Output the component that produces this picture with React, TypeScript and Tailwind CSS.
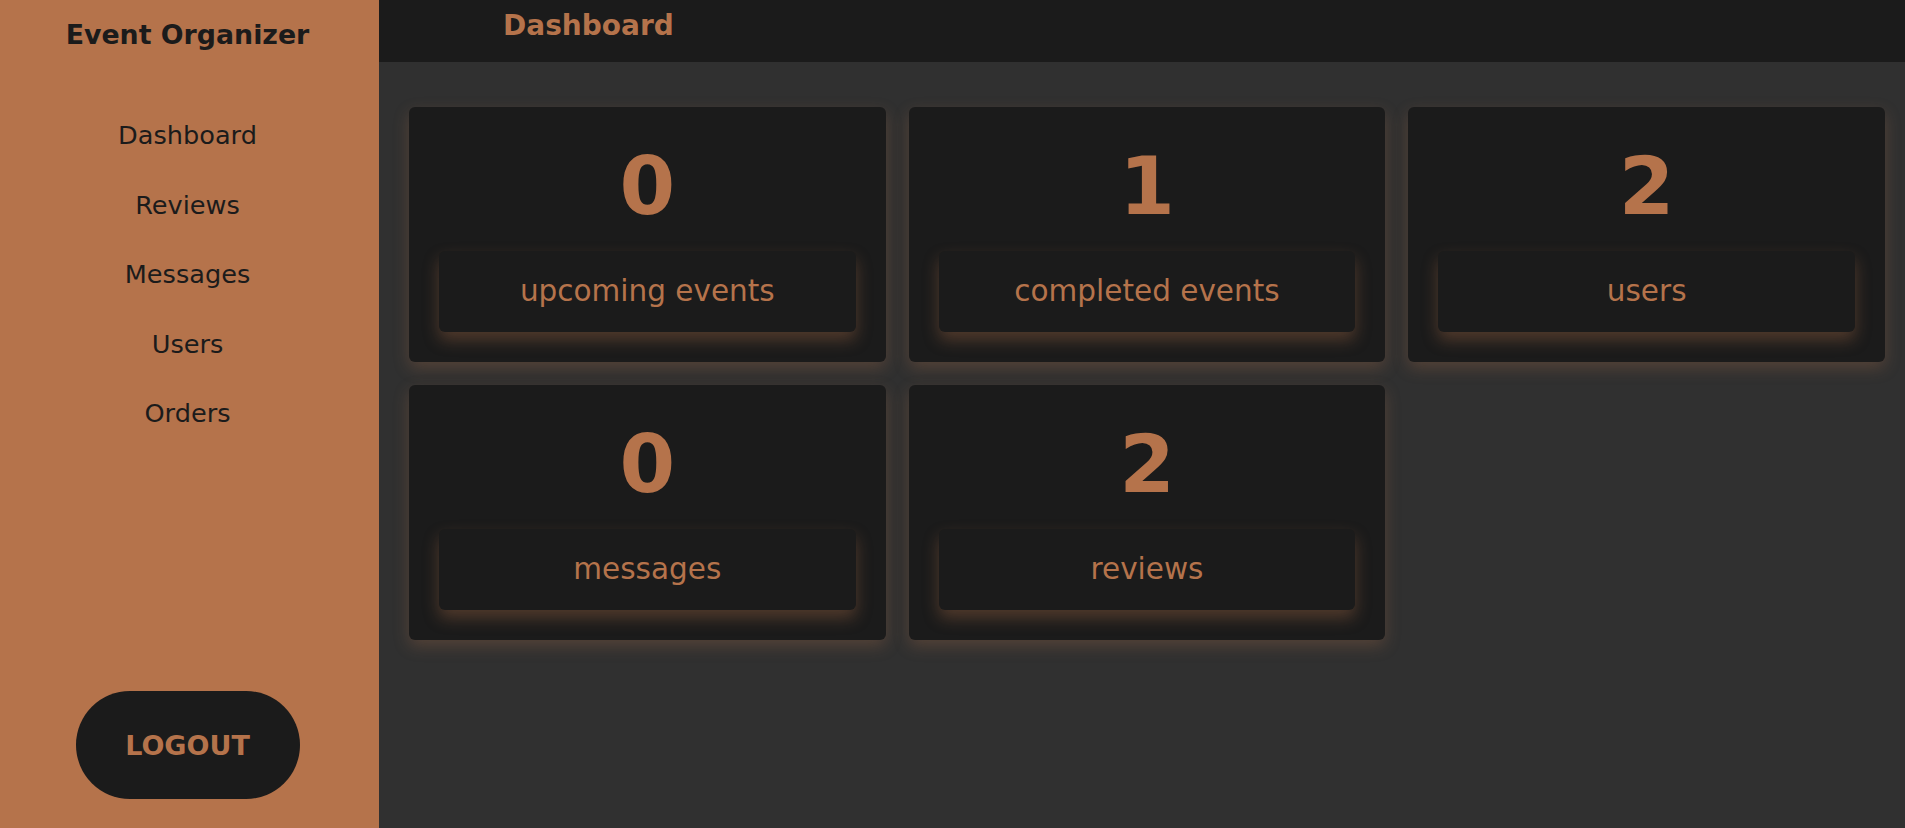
import React from 'react';

const stats = [
  { value: 0, label: 'upcoming events' },
  { value: 1, label: 'completed events' },
  { value: 2, label: 'users' },
  { value: 0, label: 'messages' },
  { value: 2, label: 'reviews' },
];

const links = ['Dashboard', 'Reviews', 'Messages', 'Users', 'Orders'];

const StatCard: React.FC<{ value: number; label: string }> = ({ value, label }) => (
  <div className="flex h-[255px] flex-col items-center rounded-[6px] bg-[#1b1b1b] px-[30px] pb-[30px] pt-[20px] shadow-[0_6px_16px_rgba(181,115,75,0.28)]">
    <div className="text-[80px] font-bold leading-normal text-[#b5734b]">{value}</div>
    <div className="mt-auto flex h-[81px] w-full items-center justify-center rounded-[6px] bg-[#1b1b1b] text-[29.5px] text-[#b5734b] shadow-[0_8px_16px_rgba(181,115,75,0.35)]">
      {label}
    </div>
  </div>
);

export default function App() {
  return (
    <div className="flex h-screen w-full font-['DejaVu_Sans',sans-serif]">
      <aside className="flex w-[379px] shrink-0 flex-col items-center bg-[#b5734b] pb-[29px] pr-[4px]">
        <h1 className="pt-[18px] text-[26.8px] font-bold leading-[34px] text-[#1b1b1b]">Event Organizer</h1>
        <nav className="mt-[68px] flex flex-col items-center gap-[39.5px]">
          {links.map((l) => (
            <a key={l} href="#" className="text-[25.6px] leading-[30px] text-[#1b1b1b]">
              {l}
            </a>
          ))}
        </nav>
        <button className="mt-auto h-[108px] w-[224px] rounded-full bg-[#1b1b1b] pt-[3px] text-[27px] font-bold text-[#b5734b]">
          LOGOUT
        </button>
      </aside>
      <main className="flex flex-1 flex-col bg-[#303030]">
        <header className="h-[62px] shrink-0 bg-[#1b1b1b] pl-[124px] pt-[8px]">
          <h2 className="text-[28px] font-bold leading-[36px] text-[#b5734b]">Dashboard</h2>
        </header>
        <section className="grid grid-cols-3 gap-[23px] pl-[30px] pr-[20px] pt-[45px]">
          {stats.map((s, i) => (
            <StatCard key={i} value={s.value} label={s.label} />
          ))}
        </section>
      </main>
    </div>
  );
}
